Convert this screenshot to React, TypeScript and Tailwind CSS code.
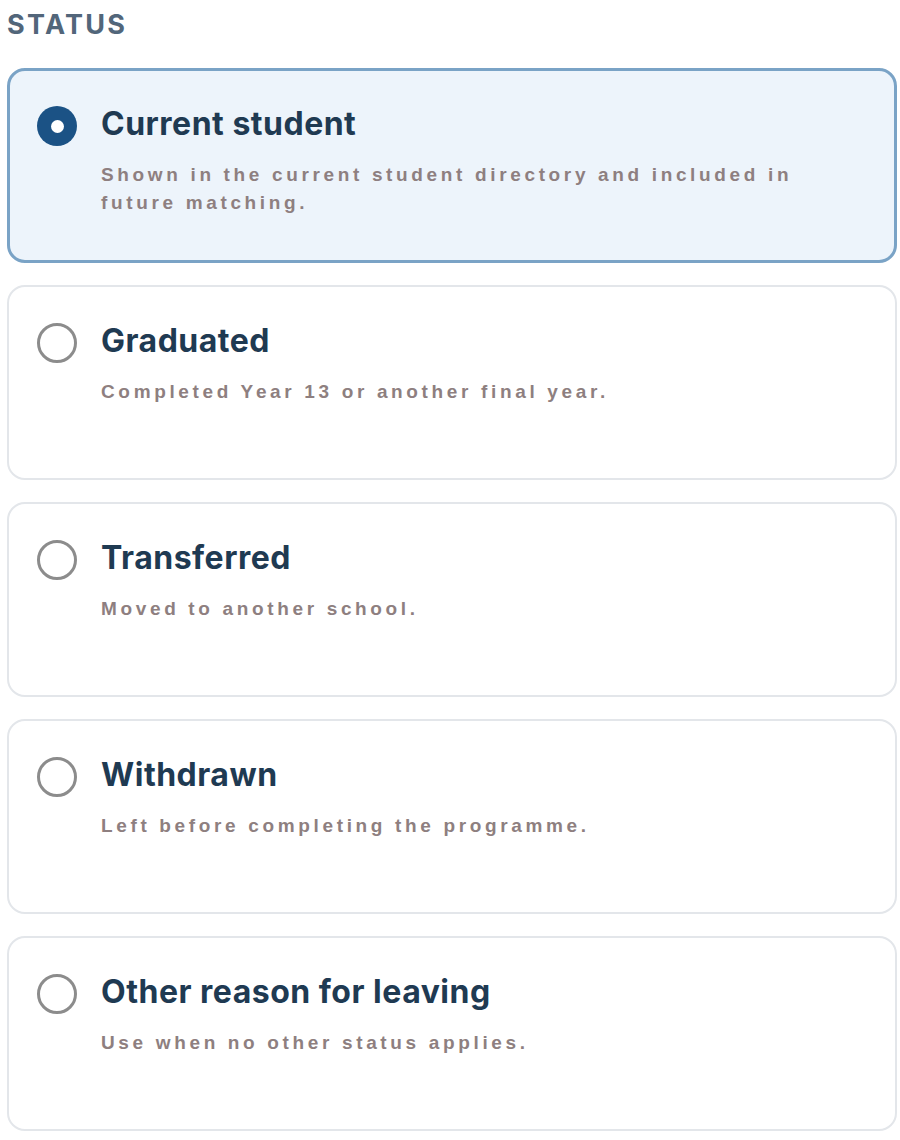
import React from "react";

type Opt = { title: string; desc: string; selected?: boolean };

const options: Opt[] = [
  {
    title: "Current student",
    desc: "Shown in the current student directory and included in future matching.",
    selected: true,
  },
  { title: "Graduated", desc: "Completed Year 13 or another final year." },
  { title: "Transferred", desc: "Moved to another school." },
  { title: "Withdrawn", desc: "Left before completing the programme." },
  { title: "Other reason for leaving", desc: "Use when no other status applies." },
];

function Radio({ selected }: { selected?: boolean }) {
  if (selected) {
    return (
      <div className="w-[40px] h-[40px] shrink-0 rounded-full bg-[#1b5285] flex items-center justify-center">
        <div className="w-[13px] h-[13px] rounded-full bg-white" />
      </div>
    );
  }
  return <div className="w-[40px] h-[40px] shrink-0 rounded-full border-[3px] border-[#8c8c8c] bg-white" />;
}

export default function App() {
  return (
    <div className="w-[900px] h-[1140px] bg-white pl-[7px] pr-[3px] pt-[10px] font-['Inter',sans-serif]">
      <div className="text-[27px] leading-[30px] font-bold tracking-[2.3px] text-[#52667a]">STATUS</div>
      <div className="mt-[28px] flex flex-col gap-[22px]">
        {options.map((o) => (
          <div
            key={o.title}
            className={
              o.selected
                ? "h-[195px] rounded-[18px] border-[3px] border-[#7aa3c6] bg-[#edf4fb] pl-[27px] pr-[40px] pt-[35px] flex gap-[24px]"
                : "h-[195px] rounded-[18px] border-2 border-[#e3e6ea] bg-white pl-[28px] pr-[40px] pt-[36px] flex gap-[24px]"
            }
          >
            <Radio selected={o.selected} />
            <div className="flex flex-col">
              <div className="text-[32px] leading-[36px] font-bold tracking-[0.5px] text-[#1f3a52]">{o.title}</div>
              <div className="mt-[19px] font-['Liberation_Sans',Arial,sans-serif] text-[19px] leading-[28px] font-bold tracking-[3.65px] text-[#8e7f80]">
                {o.desc}
              </div>
            </div>
          </div>
        ))}
      </div>
    </div>
  );
}
